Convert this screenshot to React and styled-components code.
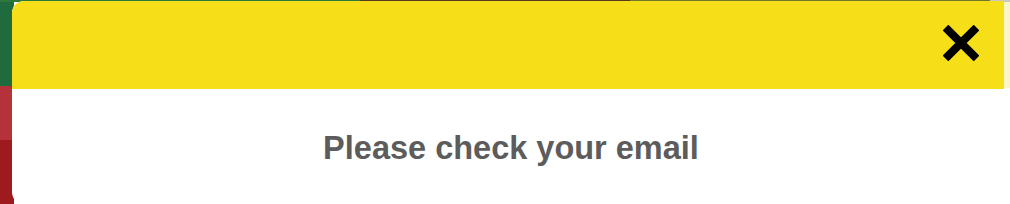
import React from "react";
import styled, { createGlobalStyle } from "styled-components";

const GlobalStyle = createGlobalStyle`
  html, body {
    margin: 0;
    padding: 0;
    width: 1010px;
    height: 204px;
    overflow: hidden;
  }
  body {
    font-family: "Liberation Sans", Arial, sans-serif;
  }
`;

const Backdrop = styled.div`
  position: relative;
  width: 1010px;
  height: 204px;
  overflow: hidden;
  background:
    linear-gradient(90deg, #2b7a3a 0 360px, #5a3a1c 360px 630px, #6b7a2a 630px 990px, #c8c8c0 990px) top / 100% 2px no-repeat,
    linear-gradient(180deg, #1f6b3d 0 86px, #b5323a 86px 140px, #9e1a1f 140px) left / 14px 100% no-repeat,
    linear-gradient(180deg, #fbf6c8 0 88px, #ffffff 88px) right / 6px 100% no-repeat,
    #ffffff;
`;

const Modal = styled.div`
  position: absolute;
  left: 12px;
  top: 1px;
  width: 992px;
  height: 203px;
  background: #ffffff;
  border-radius: 12px 0 0 12px;
  overflow: hidden;
  display: flex;
  flex-direction: column;
`;

const Header = styled.div`
  height: 88px;
  background: #f6de19;
  display: flex;
  justify-content: flex-end;
  align-items: center;
  padding-right: 25px;
`;

const CloseButton = styled.button`
  border: 0;
  background: transparent;
  padding: 0;
  width: 36px;
  height: 36px;
  display: flex;
  align-items: center;
  justify-content: center;
  cursor: pointer;
  margin-bottom: 4px;
`;

const Body = styled.div`
  display: flex;
  justify-content: center;
  padding-top: 40px;
  padding-left: 6px;
`;

const Message = styled.p`
  margin: 0;
  font-size: 32.5px;
  font-weight: bold;
  color: #5c5c5c;
  line-height: 38px;
`;

export default function App() {
  return (
    <>
      <GlobalStyle />
      <Backdrop>
        <Modal>
          <Header>
            <CloseButton aria-label="Close">
              <svg width="36" height="36" viewBox="0 0 36 36">
                <path d="M2.5 2.5 L33.5 33.5 M33.5 2.5 L2.5 33.5" stroke="#000" strokeWidth="8" strokeLinecap="butt" />
              </svg>
            </CloseButton>
          </Header>
          <Body>
            <Message>Please check your email</Message>
          </Body>
        </Modal>
      </Backdrop>
    </>
  );
}
